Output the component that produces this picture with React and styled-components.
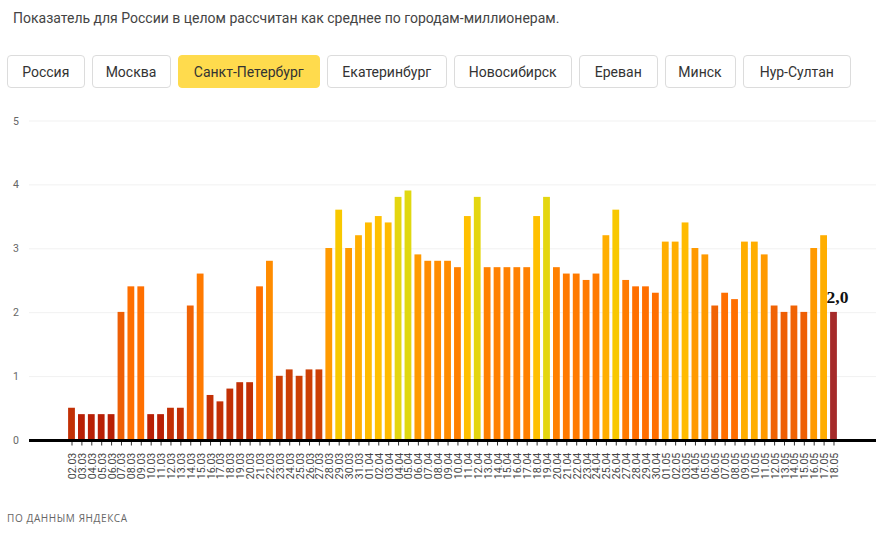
import React from 'react'
import styled, { createGlobalStyle } from 'styled-components'

const cities = [
  { name: 'Россия', width: 77.5 },
  { name: 'Москва', width: 79 },
  { name: 'Санкт-Петербург', width: 142.5, active: true },
  { name: 'Екатеринбург', width: 119.5 },
  { name: 'Новосибирск', width: 118.5 },
  { name: 'Ереван', width: 78.5 },
  { name: 'Минск', width: 71 },
  { name: 'Нур-Султан', width: 108.5 },
]

const values = [
  0.5, 0.4, 0.4, 0.4, 0.4, 2.0, 2.4, 2.4, 0.4, 0.4, 0.5, 0.5, 2.1, 2.6, 0.7, 0.6, 0.8, 0.9, 0.9, 2.4,
  2.8, 1.0, 1.1, 1.0, 1.1, 1.1, 3.0, 3.6, 3.0, 3.2, 3.4, 3.5, 3.4, 3.8, 3.9, 2.9, 2.8, 2.8, 2.8, 2.7,
  3.5, 3.8, 2.7, 2.7, 2.7, 2.7, 2.7, 3.5, 3.8, 2.7, 2.6, 2.6, 2.5, 2.6, 3.2, 3.6, 2.5, 2.4, 2.4, 2.3,
  3.1, 3.1, 3.4, 3.0, 2.9, 2.1, 2.3, 2.2, 3.1, 3.1, 2.9, 2.1, 2.0, 2.1, 2.0, 3.0, 3.2, 2.0,
]

// цвет столбика зависит от значения
const colorStops = [
  [0.4, '#b81f05'], [0.9, '#c23005'], [1.1, '#cc3f05'], [2.0, '#ee5f05'], [2.1, '#f06305'],
  [2.4, '#ff6f00'], [2.6, '#ff7a00'], [2.7, '#ff8000'], [2.8, '#ff8c00'], [3.0, '#ff9a00'],
  [3.2, '#ffae00'], [3.4, '#ffbb00'], [3.5, '#ffc000'], [3.6, '#f8c800'], [3.8, '#e4d610'], [3.9, '#e0d810'],
]
const barColor = (v) => colorStops.find(([limit]) => v <= limit)[1]

const dateLabel = (i) => {
  const d = new Date(Date.UTC(2020, 2, 2 + i))
  const day = String(d.getUTCDate()).padStart(2, '0')
  const month = String(d.getUTCMonth() + 1).padStart(2, '0')
  return `${day}.${month}`
}

const CHART_TOP = 105
const zeroY = 440.5 - CHART_TOP
const unit = 63.9
const firstX = 71.5
const stepX = 9.896
const barWidth = 6.8

export default function App() {
  return (
    <>
      <GlobalStyle />
      <Page>
        <Intro>Показатель для России в целом рассчитан как среднее по городам-миллионерам.</Intro>
        <Tabs>
          {cities.map((city) => (
            <Tab key={city.name} $active={city.active} $width={city.width}>{city.name}</Tab>
          ))}
        </Tabs>
        <Chart width="890" height="385" viewBox="0 0 890 385">
          {[1, 2, 3, 4, 5].map((n) => (
            <GridLine key={n} x1="29" x2="876" y1={zeroY - n * unit} y2={zeroY - n * unit} />
          ))}
          {[0, 1, 2, 3, 4, 5].map((n) => (
            <AxisLabel key={n} x="16" y={zeroY - n * unit + 3.5}>{n}</AxisLabel>
          ))}
          {values.map((v, i) => {
            const cx = firstX + i * stepX
            const last = i === values.length - 1
            const h = v * unit + 0.8
            return (
              <g key={i}>
                <rect
                  x={cx - barWidth / 2}
                  y={zeroY - h}
                  width={barWidth}
                  height={h}
                  fill={last ? '#a52a2a' : barColor(v)}
                />
                <Tick x1={cx + 0.5} x2={cx + 0.5} y1={zeroY} y2={zeroY + 5} />
                <DateText transform={`translate(${cx + 4.5} ${452.7 - CHART_TOP}) rotate(-90)`}>
                  {dateLabel(i)}
                </DateText>
              </g>
            )
          })}
          <Baseline x1="29" x2="876" y1={zeroY} y2={zeroY} />
          <LastValue x="837.5" y={zeroY - 2 * unit - 10}>2,0</LastValue>
        </Chart>
        <Source>По данным Яндекса</Source>
      </Page>
    </>
  )
}

const GlobalStyle = createGlobalStyle`
  html, body {
    margin: 0;
    background: #fff;
  }
`
const Page = styled.div`
  width: 890px;
  height: 535px;
  overflow: hidden;
  font-family: Roboto, "Liberation Sans", sans-serif;
`
const Intro = styled.p`
  margin: 0;
  padding: 10px 13px 0;
  font-size: 14px;
  line-height: 17px;
  color: #444;
`
const Tabs = styled.div`
  display: flex;
  gap: 7px;
  padding: 28px 7px 0;
`
const Tab = styled.div`
  width: ${(p) => p.$width}px;
  height: 33px;
  box-sizing: border-box;
  display: flex;
  align-items: center;
  justify-content: center;
  white-space: nowrap;
  font-size: 14px;
  color: #333;
  border-radius: 4px;
  border: 1px solid ${(p) => (p.$active ? '#ffdb4d' : '#dcdcdc')};
  background: ${(p) => (p.$active ? '#ffdb4d' : '#fff')};
`
const Chart = styled.svg`
  display: block;
  margin-top: 17px;
`
const GridLine = styled.line`
  stroke: #f1f1f1;
  stroke-width: 1;
`
const Baseline = styled.line`
  stroke: #000;
  stroke-width: 3;
`
const Tick = styled.line`
  stroke: #333;
  stroke-width: 1;
`
const AxisLabel = styled.text`
  font-size: 10.5px;
  fill: #666;
  text-anchor: middle;
`
const DateText = styled.text`
  font-size: 10.6px;
  fill: #444;
  text-anchor: end;
`
const LastValue = styled.text`
  font-family: "Liberation Serif", serif;
  font-weight: 700;
  font-size: 17.5px;
  fill: #111;
  text-anchor: middle;
`
const Source = styled.div`
  padding: 21px 7px 0;
  font-family: "Open Sans", sans-serif;
  font-size: 10px;
  line-height: 14px;
  letter-spacing: 0.6px;
  text-transform: uppercase;
  color: #666;
`
